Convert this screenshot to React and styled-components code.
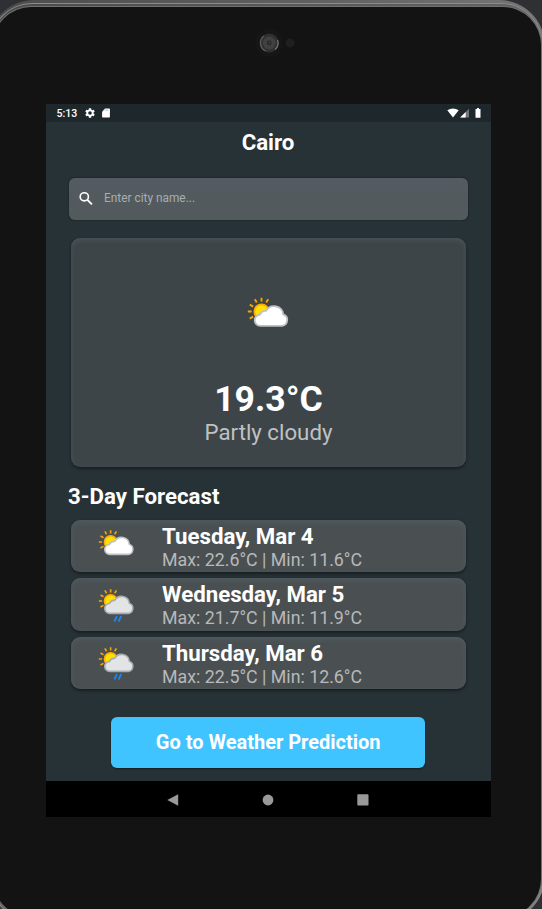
import React from "react";
import styled, { createGlobalStyle } from "styled-components";

const GlobalStyle = createGlobalStyle`
  * { box-sizing: border-box; }
  html, body { margin: 0; padding: 0; background: #2f3033; }
  body { font-family: Roboto, sans-serif; overflow: hidden; }
`;

const Page = styled.main`
  width: 542px;
  height: 909px;
  overflow: hidden;
`;

const Frame = styled.div`
  width: 557px;
  height: 922px;
  margin-left: -12px;
  padding: 3px 2px 2px 2px;
  border-radius: 46px;
  background: linear-gradient(100deg, #4c4c4c 0%, #606060 45%, #858585 100%);
`;

const Rim = styled.div`
  height: 100%;
  padding: 3.5px 2.5px 3px 3px;
  border-radius: 42px;
  background: linear-gradient(100deg, #4a4a4a, #6a6a6a);
  box-shadow: inset 0 0 0 1px #8b8b8b;
`;

const Face = styled.div`
  height: 100%;
  padding: 97.5px 0 0 53px;
  border-radius: 38px;
  background: #131313;
  box-shadow: 0 0 0 1px #707070;
  position: relative;
`;

const Camera = styled.svg`
  position: absolute;
  left: 246px;
  top: 16.5px;
`;

const Screen = styled.section`
  width: 445px;
  height: 713px;
  display: flex;
  flex-direction: column;
  background: #273237;
`;

const StatusBar = styled.header`
  height: 18px;
  flex: none;
  display: flex;
  justify-content: space-between;
  padding: 0 10.5px;
  background: #1e272b;
`;

const StatusGroup = styled.div`
  display: flex;
  align-items: center;
  color: #fff;
  font-size: 10.6px;
  font-weight: 500;
`;

const AppBody = styled.div`
  height: 659px;
  padding: 0 23px;
  display: flex;
  flex-direction: column;
`;

const Title = styled.h1`
  margin: 0 1px 0 0;
  height: 56px;
  line-height: 41px;
  text-align: center;
  color: #fff;
  font-size: 22.25px;
  font-weight: 700;
`;

const SearchField = styled.label`
  height: 42px;
  flex: none;
  display: flex;
  align-items: center;
  gap: 11px;
  padding: 0 9px 2px 10px;
  border-radius: 6px;
  background: linear-gradient(#545b61, #535a5c);
  box-shadow: 0 0 1px 1px rgba(20, 28, 30, 0.35);
  color: #a9adaf;
  font-size: 11.87px;
`;

const Card = styled.article`
  flex: none;
  margin: 0 2px;
  border-radius: 9px;
  box-shadow: 0 1.5px 3px rgba(0, 0, 0, 0.4),
    inset 0 2px 5px rgba(90, 108, 120, 0.4);
`;

const CurrentCard = styled(Card)`
  height: 229.5px;
  margin-top: 17.5px;
  padding-top: 55px;
  display: flex;
  flex-direction: column;
  align-items: center;
  background: #3e4548;
`;

const CurrentIcon = styled.div`
  padding-right: 1.5px;
`;

const Temperature = styled.div`
  margin-top: 45px;
  height: 43px;
  line-height: 43px;
  color: #fff;
  font-size: 35.6px;
  font-weight: 700;
`;

const Condition = styled.div`
  height: 26px;
  margin-top: -2px;
  line-height: 26px;
  color: #bfc1c2;
  font-size: 22.25px;
`;

const SectionTitle = styled.h2`
  margin: 16px 0 9.5px -1px;
  height: 27px;
  line-height: 27px;
  color: #fff;
  font-size: 22.25px;
  font-weight: 700;
`;

const ForecastList = styled.div`
  display: flex;
  flex-direction: column;
  gap: 6px;
`;

const ForecastRow = styled(Card)`
  height: 52.6px;
  display: flex;
  align-items: center;
  padding-left: 28px;
  background: #4a5052;
`;

const ForecastIcon = styled.div`
  flex: none;
  padding-bottom: 4.5px;
`;

const ForecastText = styled.div`
  margin-left: 28.5px;
  padding-top: 2.6px;
`;

const Day = styled.div`
  height: 25px;
  line-height: 25px;
  color: #fff;
  font-size: 22.25px;
  font-weight: 700;
`;

const Range = styled.div`
  height: 22px;
  line-height: 22px;
  color: #b7b9ba;
  font-size: 17.8px;
`;

const PredictButton = styled.button`
  width: 314px;
  height: 51px;
  flex: none;
  align-self: center;
  margin: 28px 0.6px 0 0;
  padding: 0 0 1px;
  border: 0;
  border-radius: 6px;
  background: #40c4ff;
  box-shadow: 0 1px 2px rgba(0, 0, 0, 0.45);
  color: #fff;
  font: 700 20px Roboto, sans-serif;
`;

const NavBar = styled.nav`
  height: 36px;
  flex: none;
  display: flex;
  justify-content: center;
  align-items: center;
  gap: 83px;
  padding: 1px 1px 0 0;
  background: #000;
`;

const Glyph = styled.svg`
  display: block;
  flex: none;
  overflow: visible;
  margin-left: ${(p) => p.$left || 0}px;
`;

function WeatherIcon({ size, rain }) {
  return (
    <Glyph width={size} height={size} viewBox="0 0 40 40">
      <g stroke="#f7a400" strokeWidth="1.9" strokeLinecap="butt">
        <path d="M13.5 4.8V8.6M6.8 6.3l2 3.3M1.8 11.6l3.4 2M-.2 18.5h3.8M1.7 25.6l3.5-2M20.2 6.3l-2 3.3" />
      </g>
      <circle cx="13.5" cy="18.5" r="7.2" fill="#ffe000" stroke="#ffab0a" strokeWidth="1.8" />
      <path
        d="M12.5 32.9A5.7 5.7 0 0 1 12.2 21.5a5.5 5.5 0 0 1 6-3.6A9.1 9.1 0 0 1 35.2 21.3a6 6 0 0 1-1.1 11.6Z"
        fill={rain ? "#e3e4e6" : "#fff"}
        stroke={rain ? "#a8adb0" : "#bfc1c4"}
        strokeWidth="1.8"
        strokeLinejoin="round"
      />
      {rain && <path d="m20.8 36.1-3 6.2m7.9-6.2-3 6.2" stroke="#2086e8" strokeWidth="2.2" />}
    </Glyph>
  );
}

const forecast = [
  { day: "Tuesday, Mar 4", max: "22.6", min: "11.6", rain: false },
  { day: "Wednesday, Mar 5", max: "21.7", min: "11.9", rain: true },
  { day: "Thursday, Mar 6", max: "22.5", min: "12.6", rain: true },
];

export default function App() {
  return (
    <Page>
      <GlobalStyle />
      <Frame>
        <Rim>
          <Face>
            <Camera width="60" height="40" viewBox="0 0 60 40">
              <circle cx="30.2" cy="20" r="14" fill="#161616" />
              <circle cx="30.2" cy="20" r="9.4" fill="#303030" />
              <path d="M27 28A8.7 8.7 0 0 1 25 12.9" fill="none" stroke="#5c5c5c" strokeWidth="1.3" />
              <path d="M38.5 17A8.7 8.7 0 0 1 36 26.5" fill="none" stroke="#747474" strokeWidth="1.3" />
              <circle cx="30.2" cy="20" r="6.4" fill="#414141" />
              <circle cx="30.2" cy="20" r="2.4" fill="#2b2b2b" />
              <circle cx="30.6" cy="19.6" r=".8" fill="#484848" />
              <circle cx="51" cy="20" r="4.6" fill="#1f1f1f" />
            </Camera>
            <Screen>
              <StatusBar>
                <StatusGroup>
                  5:13
                  <Glyph $left={7} width="12" height="12" viewBox="0 0 24 24" fill="#fff">
                    <path d="M19.14 12.94c.04-.3.06-.61.06-.94s-.02-.64-.07-.94l2.03-1.58a.5.5 0 0 0 .12-.61l-1.92-3.32a.49.49 0 0 0-.59-.22l-2.39.96a7 7 0 0 0-1.62-.94l-.36-2.54a.48.48 0 0 0-.48-.41h-3.84a.48.48 0 0 0-.47.41l-.36 2.54a7.2 7.2 0 0 0-1.62.94l-2.39-.96a.48.48 0 0 0-.59.22L2.74 8.87a.48.48 0 0 0 .12.61l2.03 1.58a6 6 0 0 0 0 1.88l-2.03 1.58a.5.5 0 0 0-.12.61l1.92 3.32c.12.22.37.29.59.22l2.39-.96c.5.38 1.03.7 1.62.94l.36 2.54c.05.24.24.41.48.41h3.84c.24 0 .44-.17.47-.41l.36-2.54a7.2 7.2 0 0 0 1.62-.94l2.39.96c.22.08.47 0 .59-.22l1.92-3.32a.48.48 0 0 0-.12-.61zM12 15.6a3.6 3.6 0 1 1 0-7.2 3.6 3.6 0 0 1 0 7.2" />
                  </Glyph>
                  <Glyph $left={5} width="10" height="12" viewBox="0 0 22 24" fill="#fff">
                    <path d="M9 2h9a1.6 1.6 0 0 1 1.6 1.6v16.8A1.6 1.6 0 0 1 18 22H4a1.6 1.6 0 0 1-1.6-1.6V9z" />
                    <path d="M9 4v4m3-4v4m3-4v4" stroke="#999" strokeWidth="1" />
                  </Glyph>
                </StatusGroup>
                <StatusGroup>
                  <Glyph width="12" height="10" viewBox="0 0 12 10" fill="#fff">
                    <path d="M.3 2.3Q6-1.5 11.7 2.3L6 9.5Z" />
                  </Glyph>
                  <Glyph $left={1} width="10" height="10" viewBox="0 0 10 10">
                    <path d="M.2 9.5 9 .7v8.8Z" fill="#70767a" />
                    <path d="M.2 9.5 5.7 4v5.5Z" fill="#fff" />
                  </Glyph>
                  <Glyph $left={5} width="6" height="11" viewBox="0 0 6 11" fill="#fff">
                    <path d="M2 0h2v1h1.5v8.8h-5V1H2z" />
                  </Glyph>
                </StatusGroup>
              </StatusBar>
              <AppBody>
                <Title>Cairo</Title>
                <SearchField>
                  <Glyph width="14" height="14" viewBox="0 0 14 14" fill="none" stroke="#fff">
                    <circle cx="5.3" cy="5.8" r="4.1" strokeWidth="1.6" />
                    <path d="m8.2 8.7 4.7 4.7" strokeWidth="1.9" />
                  </Glyph>
                  Enter city name...
                </SearchField>
                <CurrentCard>
                  <CurrentIcon>
                    <WeatherIcon size={40} />
                  </CurrentIcon>
                  <Temperature>19.3°C</Temperature>
                  <Condition>Partly cloudy</Condition>
                </CurrentCard>
                <SectionTitle>3-Day Forecast</SectionTitle>
                <ForecastList>
                  {forecast.map((f) => (
                    <ForecastRow key={f.day}>
                      <ForecastIcon>
                        <WeatherIcon size={34.5} rain={f.rain} />
                      </ForecastIcon>
                      <ForecastText>
                        <Day>{f.day}</Day>
                        <Range>Max: {f.max}°C | Min: {f.min}°C</Range>
                      </ForecastText>
                    </ForecastRow>
                  ))}
                </ForecastList>
                <PredictButton>Go to Weather Prediction</PredictButton>
              </AppBody>
              <NavBar>
                <Glyph width="12" height="12" viewBox="0 0 12 12" fill="#999">
                  <path d="M.3 6 11.2.2v11.6Z" />
                </Glyph>
                <Glyph width="12" height="12" viewBox="0 0 12 12" fill="#999">
                  <circle cx="6" cy="6" r="5.4" />
                </Glyph>
                <Glyph width="12" height="12" viewBox="0 0 12 12" fill="#999">
                  <rect x=".3" y=".3" width="11.2" height="11.2" rx=".8" />
                </Glyph>
              </NavBar>
            </Screen>
          </Face>
        </Rim>
      </Frame>
    </Page>
  );
}
